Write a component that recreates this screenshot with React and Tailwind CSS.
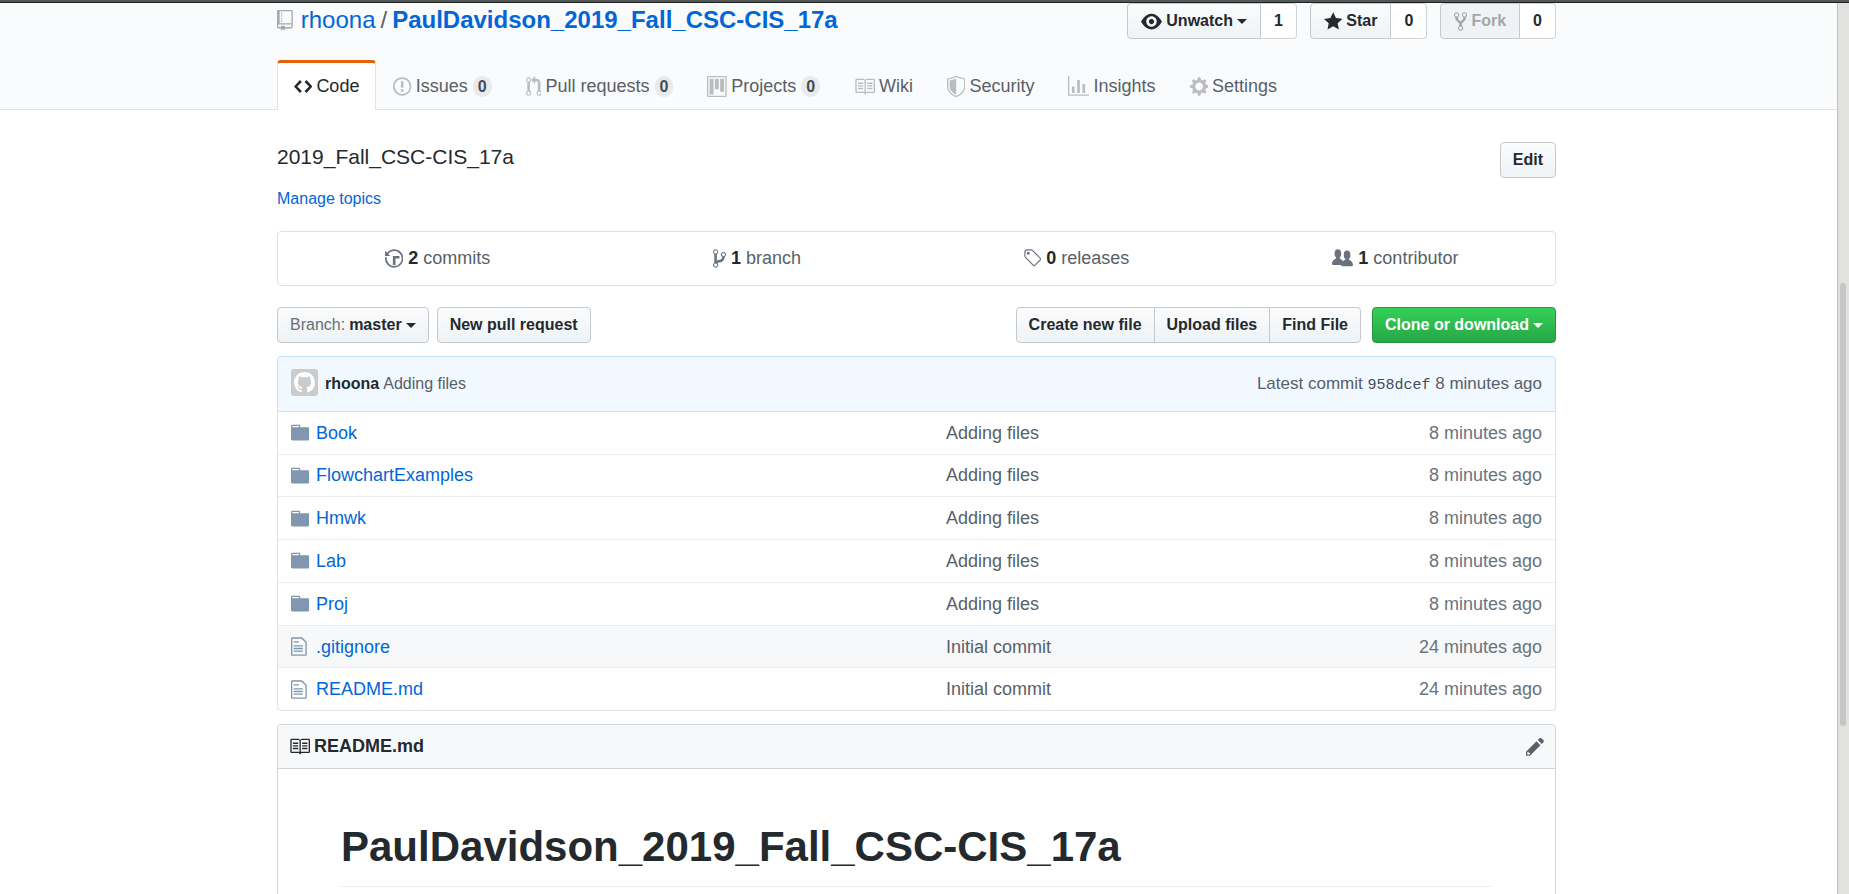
import React from "react";

const ICONS = {
  repo: [12, "M4 9H3V8h1v1zm0-3H3v1h1V6zm0-2H3v1h1V4zm0-2H3v1h1V2zm8-1v12c0 .55-.45 1-1 1H6v2l-1.5-1.5L3 16v-2H1c-.55 0-1-.45-1-1V1c0-.55.45-1 1-1h10c.55 0 1 .45 1 1zm-1 10H1v2h2v-1h3v1h5v-2zm0-10H2v9h9V1z"],
  code: [14, "M9.5 3L8 4.5 11.5 8 8 11.5 9.5 13 14 8 9.5 3zm-5 0L0 8l4.5 5L6 11.5 2.5 8 6 4.5 4.5 3z"],
  issue: [14, "M7 2.3c3.14 0 5.7 2.56 5.7 5.7s-2.56 5.7-5.7 5.7A5.71 5.71 0 0 1 1.3 8c0-3.14 2.56-5.7 5.7-5.7zM7 1C3.14 1 0 4.14 0 8s3.14 7 7 7 7-3.14 7-7-3.14-7-7-7zm1 3H6v5h2V4zm0 6H6v2h2v-2z"],
  pull: [12, "M11 11.28V5c-.03-.78-.34-1.47-.94-2.06C9.46 2.35 8.78 2.03 8 2H7V0L4 3l3 3V4h1c.27.02.48.11.69.31.21.2.3.42.31.69v6.28A1.993 1.993 0 0 0 10 15a1.993 1.993 0 0 0 1-3.72zm-1 2.92c-.66 0-1.2-.55-1.2-1.2 0-.65.55-1.2 1.2-1.2.65 0 1.2.55 1.2 1.2 0 .65-.55 1.2-1.2 1.2zM4 3c0-1.11-.89-2-2-2a1.993 1.993 0 0 0-1 3.72v6.56A1.993 1.993 0 0 0 2 15a1.993 1.993 0 0 0 1-3.72V4.72c.59-.34 1-.98 1-1.72zm-.8 10c0 .66-.55 1.2-1.2 1.2-.65 0-1.2-.55-1.2-1.2 0-.65.55-1.2 1.2-1.2.65 0 1.2.55 1.2 1.2zM2 4.2C1.34 4.2.8 3.65.8 3c0-.65.55-1.2 1.2-1.2.65 0 1.2.55 1.2 1.2 0 .65-.55 1.2-1.2 1.2z"],
  project: [15, "M10 12h3V2h-3v10zm-4-2h3V2H6v8zm-4 4h3V2H2v12zm-1 1h13V1H1v14zM14 0H1a1 1 0 0 0-1 1v14a1 1 0 0 0 1 1h13a1 1 0 0 0 1-1V1a1 1 0 0 0-1-1z"],
  book: [16, "M3 5h4v1H3V5zm0 3h4V7H3v1zm0 2h4V9H3v1zm11-5h-4v1h4V5zm0 2h-4v1h4V7zm0 2h-4v1h4V9zm2-6v9c0 .55-.45 1-1 1H9.5l-1 1-1-1H2c-.55 0-1-.45-1-1V3c0-.55.45-1 1-1h5.5l1 1 1-1H15c.55 0 1 .45 1 1zm-8 .5L7.5 3H2v9h6V3.5zm7-.5H9.5l-.5.5V12h6V3z"],
  shield: [14, "M0 2l7-2 7 2v6.02C14 12.69 8.69 16 7 16c-1.69 0-7-3.31-7-7.98V2zm1 .75L7 1l6 1.75v5.268C13 12.104 8.449 15 7 15c-1.449 0-6-2.896-6-6.982V2.75zm1 .75L7 2v12c-1.207 0-5-2.482-5-5.985V3.5z"],
  graph: [16, "M16 14v1H0V0h1v14h15zM5 13H3V8h2v5zm4 0H7V3h2v10zm4 0h-2V6h2v7z"],
  gear: [14, "M14 8.77v-1.6l-1.94-.64-.45-1.09.88-1.84-1.13-1.13-1.81.91-1.09-.45-.69-1.92h-1.6l-.63 1.94-1.11.45-1.84-.88-1.13 1.13.91 1.81-.45 1.09L0 7.23v1.59l1.94.64.45 1.09-.88 1.84 1.13 1.13 1.81-.91 1.09.45.69 1.92h1.59l.63-1.94 1.11-.45 1.84.88 1.13-1.13-.92-1.81.47-1.09L14 8.75v.02zM7 11c-1.66 0-3-1.34-3-3s1.34-3 3-3 3 1.34 3 3-1.34 3-3 3z"],
  eye: [16, "M8.06 2C3 2 0 8 0 8s3 6 8.06 6C13 14 16 8 16 8s-3-6-7.94-6zM8 12c-2.2 0-4-1.78-4-4 0-2.2 1.8-4 4-4 2.22 0 4 1.8 4 4 0 2.22-1.78 4-4 4zm2-4c0 1.11-.89 2-2 2-1.11 0-2-.89-2-2 0-1.11.89-2 2-2 1.11 0 2 .89 2 2z"],
  star: [14, "M14 6l-4.9-.64L7 1 4.9 5.36 0 6l3.6 3.26L2.67 14 7 11.67 11.33 14l-.93-4.74L14 6z"],
  fork: [10, "M8 1a1.993 1.993 0 0 0-1 3.72V6L5 8 3 6V4.72A1.993 1.993 0 0 0 2 1a1.993 1.993 0 0 0-1 3.72V6.5l3 3v1.78A1.993 1.993 0 0 0 5 15a1.993 1.993 0 0 0 1-3.72V9.5l3-3V4.72A1.993 1.993 0 0 0 8 1zM2 4.2C1.34 4.2.8 3.65.8 3c0-.65.55-1.2 1.2-1.2.65 0 1.2.55 1.2 1.2 0 .65-.55 1.2-1.2 1.2zm3 10c-.66 0-1.2-.55-1.2-1.2 0-.65.55-1.2 1.2-1.2.65 0 1.2.55 1.2 1.2 0 .65-.55 1.2-1.2 1.2zm3-10c-.66 0-1.2-.55-1.2-1.2 0-.65.55-1.2 1.2-1.2.65 0 1.2.55 1.2 1.2 0 .65-.55 1.2-1.2 1.2z"],
  history: [14, "M8 13H6V6h5v2H8v5zM7 1C4.81 1 2.87 2.02 1.59 3.59L0 2v4h4L2.5 4.5C3.55 3.17 5.17 2.3 7 2.3c3.14 0 5.7 2.56 5.7 5.7s-2.56 5.7-5.7 5.7A5.71 5.71 0 0 1 1.3 8c0-.34.03-.67.09-1H.08C.03 7.33 0 7.66 0 8c0 3.86 3.14 7 7 7s7-3.14 7-7-3.14-7-7-7z"],
  branch: [10, "M10 5c0-1.11-.89-2-2-2a1.993 1.993 0 0 0-1 3.72v.3c-.02.52-.23.98-.63 1.38-.4.4-.86.61-1.38.63-.83.02-1.48.16-2 .45V4.72a1.993 1.993 0 0 0-1-3.72C.88 1 0 1.89 0 3a2 2 0 0 0 1 1.72v6.56c-.59.35-1 .99-1 1.72 0 1.11.89 2 2 2 1.11 0 2-.89 2-2 0-.53-.2-1-.53-1.36.09-.06.48-.41.59-.47.25-.11.56-.17.94-.17 1.05-.05 1.95-.45 2.75-1.25S8.95 7.77 9 6.73h-.02C9.59 6.37 10 5.73 10 5zM2 1.8c.66 0 1.2.55 1.2 1.2 0 .65-.55 1.2-1.2 1.2C1.35 4.2.8 3.65.8 3c0-.65.55-1.2 1.2-1.2zm0 12.41c-.66 0-1.2-.55-1.2-1.2 0-.65.55-1.2 1.2-1.2.65 0 1.2.55 1.2 1.2 0 .65-.55 1.2-1.2 1.2zm6-8c-.66 0-1.2-.55-1.2-1.2 0-.65.55-1.2 1.2-1.2.65 0 1.2.55 1.2 1.2 0 .65-.55 1.2-1.2 1.2z"],
  tag: [14, "M7.685 1.72a2.49 2.49 0 0 0-1.76-.726H3.48A2.5 2.5 0 0 0 .994 3.48v2.456c0 .656.269 1.292.726 1.76l6.024 6.024a.99.99 0 0 0 1.402 0l4.563-4.563a.99.99 0 0 0 0-1.402L7.685 1.72zM2.366 7.048a1.54 1.54 0 0 1-.467-1.123V3.48c0-.874.716-1.58 1.58-1.58h2.456c.418 0 .825.159 1.123.467l6.104 6.094-4.702 4.702-6.094-6.114zm.626-4.066h1.989v1.989H2.982V2.982h.01z"],
  people: [16, "M16 12.999c0 .439-.45 1-1 1H7.995c-.539 0-.994-.447-.995-.999H1c-.54 0-1-.561-1-1 0-2.634 3-4 3-4s.229-.409 0-1c-.841-.621-1.058-.59-1-3 .058-2.419 1.367-3 2.5-3s2.442.58 2.5 3c.058 2.41-.159 2.379-1 3-.229.59 0 1 0 1s1.549.711 2.42 2.088C9.196 9.369 10 8.999 10 8.999s.229-.409 0-1c-.841-.62-1.058-.59-1-3 .058-2.419 1.367-3 2.5-3s2.437.581 2.495 3c.059 2.41-.158 2.38-1 3-.229.59 0 1 0 1s3.005 1.366 3.005 4z"],
  folder: [14, "M13 4H7V3c0-.66-.31-1-1-1H1c-.55 0-1 .45-1 1v10c0 .55.45 1 1 1h12c.55 0 1-.45 1-1V5c0-.55-.45-1-1-1zM6 4H1V3h5v1z"],
  file: [12, "M6 5H2V4h4v1zM2 8h7V7H2v1zm0 2h7V9H2v1zm0 2h7v-1H2v1zm10-7.5V14c0 .55-.45 1-1 1H1c-.55 0-1-.45-1-1V2c0-.55.45-1 1-1h7.5L12 4.5zM11 5L8 2H1v12h10V5z"],
  pencil: [14, "M0 12v3h3l8-8-3-3-8 8zm3 2H1v-2h1v1h1v1zm10.3-9.3L12 6 9 3l1.3-1.3a.996.996 0 0 1 1.41 0l1.59 1.59c.39.39.39 1.02 0 1.41z"],
  mark: [16, "M8 0C3.58 0 0 3.58 0 8c0 3.54 2.29 6.53 5.47 7.59.4.07.55-.17.55-.38 0-.19-.01-.82-.01-1.49-2.01.37-2.53-.49-2.69-.94-.09-.23-.48-.94-.82-1.13-.28-.15-.68-.52-.01-.53.63-.01 1.08.58 1.23.82.72 1.21 1.87.87 2.33.66.07-.52.28-.87.51-1.07-1.78-.2-3.64-.89-3.64-3.95 0-.87.31-1.59.82-2.15-.08-.2-.36-1.02.08-2.12 0 0 .67-.21 2.2.82.64-.18 1.32-.27 2-.27.68 0 1.36.09 2 .27 1.53-1.04 2.2-.82 2.2-.82.44 1.1.16 1.92.08 2.12.51.56.82 1.27.82 2.15 0 3.07-1.87 3.75-3.65 3.95.29.25.54.73.54 1.48 0 1.07-.01 1.93-.01 2.2 0 .21.15.46.55.38A8.013 8.013 0 0 0 16 8c0-4.42-3.58-8-8-8z"],
};

function Icon({ name, className = "" }) {
  const [w, d] = ICONS[name];
  return (
    <svg viewBox={`0 0 ${w} 16`} className={`h-[21px] shrink-0 fill-current ${className}`} aria-hidden="true">
      <path fillRule="evenodd" d={d} />
    </svg>
  );
}

function Caret() {
  return <span className="border-x-[5px] border-t-[5px] border-x-transparent border-t-current" />;
}

const BTN =
  "flex h-9 items-center gap-1 border border-[#c5c9cd] bg-linear-to-b from-[#fafbfc] to-[#eff3f6] text-[16px] font-bold leading-[26px] whitespace-nowrap";

function Social({ icon, label, count, caret, disabled }) {
  return (
    <li className="flex">
      <button type="button" disabled={disabled} className={`${BTN} rounded-l px-[13px] disabled:from-[#eff3f6] disabled:text-[#a2a6aa]`}>
        <Icon name={icon} />
        {label}
        {caret && <Caret />}
      </button>
      <a href="#count" className="flex h-9 items-center rounded-r border border-l-0 border-[#d1d4d7] bg-white px-[13px] text-[16px] font-bold">
        {count}
      </a>
    </li>
  );
}

const TABS = [
  ["code", "Code"],
  ["issue", "Issues", 0],
  ["pull", "Pull requests", 0],
  ["project", "Projects", 0],
  ["book", "Wiki"],
  ["shield", "Security"],
  ["graph", "Insights"],
  ["gear", "Settings"],
];

const STATS = [
  ["history", 2, "commits"],
  ["branch", 1, "branch"],
  ["tag", 0, "releases"],
  ["people", 1, "contributor"],
];

const FILES = [
  ["folder", "Book", "Adding files", "8 minutes ago"],
  ["folder", "FlowchartExamples", "Adding files", "8 minutes ago"],
  ["folder", "Hmwk", "Adding files", "8 minutes ago"],
  ["folder", "Lab", "Adding files", "8 minutes ago"],
  ["folder", "Proj", "Adding files", "8 minutes ago"],
  ["file", ".gitignore", "Initial commit", "24 minutes ago"],
  ["file", "README.md", "Initial commit", "24 minutes ago"],
];

const WRAP = "mx-auto w-full max-w-[1279px]";

function Header() {
  return (
    <header className="border-b border-[#e1e4e8] bg-[#fafbfc] pr-1">
      <div className={WRAP}>
        <div className="flex items-start justify-between">
          <h1 className="flex items-center text-[24px] leading-[34px] text-[#586069]">
            <Icon name="repo" className="mr-2 text-[#a3a8ae]" />
            <a href="#owner" className="text-[#0366d6]">rhoona</a>
            <span className="mx-[5px]">/</span>
            <a href="#repo" className="font-bold text-[#0366d6]">PaulDavidson_2019_Fall_CSC-CIS_17a</a>
          </h1>
          <ul className="flex gap-[13px]">
            <Social icon="eye" label="Unwatch" count={1} caret />
            <Social icon="star" label="Star" count={0} />
            <Social icon="fork" label="Fork" count={0} disabled />
          </ul>
        </div>
        <nav className="-mb-px mt-[21px] flex text-[18px] leading-[27px]">
          {TABS.map(([icon, label, count]) => {
            const active = icon === "code";
            return (
              <a
                key={label}
                href={`#${icon}`}
                className={`flex h-[50px] items-center gap-1 rounded-t border border-t-[3px] border-b-0 px-4 ${
                  active ? "border-[#e1e4e8] border-t-[#e36209] bg-white text-[#24292e]" : "border-transparent text-[#586069]"
                }`}
              >
                <Icon name={icon} className={active ? "" : "text-[#babcbf]"} />
                {label}
                {count !== undefined && (
                  <span className="ml-px rounded-full bg-[#e8eaeb] px-[5px] text-[16px] leading-[21px] font-bold text-[#444d56]">{count}</span>
                )}
              </a>
            );
          })}
        </nav>
      </div>
    </header>
  );
}

export default function App() {
  return (
    <div className="flex h-screen flex-col overflow-hidden bg-white font-['Liberation_Sans',Arial,sans-serif] text-[#24292e]">
      <div className="h-[3px] shrink-0 border-b border-[#1c2120] bg-[#525956]" />
      <div className="flex min-h-0 flex-1">
        <div className="min-w-0 flex-1 overflow-y-auto [scrollbar-width:none]">
          <Header />
          <main className="pr-1">
            <div className={WRAP}>
              <div className="flex items-start justify-between pt-8">
                <div>
                  <p className="text-[21px] leading-[29px]">2019_Fall_CSC-CIS_17a</p>
                  <a href="#topics" className="mt-4 block text-[16px] leading-6 text-[#0366d6]">Manage topics</a>
                </div>
                <button type="button" className={`${BTN} rounded px-3`}>Edit</button>
              </div>

              <ul className="mt-5 grid h-[55px] grid-cols-4 rounded border border-[#dfe2e5] text-[18px] text-[#586069]">
                {STATS.map(([icon, n, label]) => (
                  <li key={label} className="flex">
                    <a href={`#${label}`} className="flex flex-1 items-center justify-center gap-[5px]">
                      <Icon name={icon} className="text-[#6a737d]" />
                      <b className="text-[#24292e]">{n}</b>
                      {label}
                    </a>
                  </li>
                ))}
              </ul>

              <div className="mt-[21px] flex">
                <button type="button" className={`${BTN} rounded px-3`}>
                  <span className="font-normal text-[#6a6e72]">Branch:</span>
                  master
                  <Caret />
                </button>
                <button type="button" className={`${BTN} ml-2 rounded px-3`}>New pull request</button>
                <div className="ml-auto flex">
                  <button type="button" className={`${BTN} rounded-l px-3`}>Create new file</button>
                  <button type="button" className={`${BTN} -ml-px px-3`}>Upload files</button>
                  <button type="button" className={`${BTN} -ml-px rounded-r px-3`}>Find File</button>
                </div>
                <button type="button" className="ml-[11px] flex h-9 items-center gap-1 rounded border border-[#279441] bg-linear-to-b from-[#34d058] to-[#28a745] px-3 text-[16px] font-bold whitespace-nowrap text-white">
                  Clone or download
                  <Caret />
                </button>
              </div>

              <div className="mt-[13px] flex h-14 items-center rounded-t border border-[#c8e1ff] bg-[#f1f8ff] px-[13px] text-[16px] text-[#586069]">
                <span className="mr-[7px] mb-1 flex size-[27px] items-center justify-center rounded-[3px] bg-[#cbcbcb] text-white">
                  <Icon name="mark" />
                </span>
                <a href="#author" className="font-bold text-[#24292e]">rhoona</a>
                <a href="#message" className="ml-1">Adding files</a>
                <span className="ml-auto text-[17px]">
                  Latest commit{" "}
                  <a href="#sha" className="font-['Liberation_Mono',monospace] text-[15px] text-[#444d56]">958dcef</a>{" "}
                  8 minutes ago
                </span>
              </div>
              <div className="rounded-b border border-t-0 border-[#dfe2e5]">
                <table className="h-[298px] w-full table-fixed text-[18px] leading-[26px]">
                  <colgroup>
                    <col className="w-[38px]" />
                    <col className="w-[630px]" />
                    <col />
                    <col className="w-[240px]" />
                  </colgroup>
                  <tbody>
                    {FILES.map(([icon, name, message, age]) => (
                      <tr key={name} className={`border-t border-[#eaecef] first:border-t-0 ${name === ".gitignore" ? "bg-[#f6f8fa]" : ""}`}>
                        <td className="pl-[13px] text-[#8196b0]"><Icon name={icon} /></td>
                        <td><a href={`#${name}`} className="text-[#0366d6]">{name}</a></td>
                        <td className="text-[#586069]">{message}</td>
                        <td className="pr-[13px] text-right text-[#6a737d]">{age}</td>
                      </tr>
                    ))}
                  </tbody>
                </table>
              </div>

              <section className="mt-[13px] rounded border border-[#d1d5da]">
                <div className="flex h-[43px] items-center justify-between rounded-t bg-[#f6f8fa] px-[11px]">
                  <h3 className="flex items-center gap-1 text-[18px] font-bold">
                    <Icon name="book" />
                    README.md
                  </h3>
                  <button type="button" aria-label="Edit this file" className="text-[#586069]">
                    <Icon name="pencil" />
                  </button>
                </div>
                <article className="border-t border-[#d1d5da] px-[63px] pt-[52px] pb-24">
                  <h1 className="border-b border-[#eaecef] pb-[13px] text-[42px] leading-[52px] font-bold">
                    PaulDavidson_2019_Fall_CSC-CIS_17a
                  </h1>
                </article>
              </section>
            </div>
          </main>
        </div>
        <div className="w-3 shrink-0 border-l border-[#bfc1be] bg-[#e1e1df] pl-0.5" aria-hidden="true">
          <div className="h-[280px]" />
          <div className="h-[443px] w-[6px] rounded-full bg-[#c4c5c4]" />
        </div>
      </div>
    </div>
  );
}
